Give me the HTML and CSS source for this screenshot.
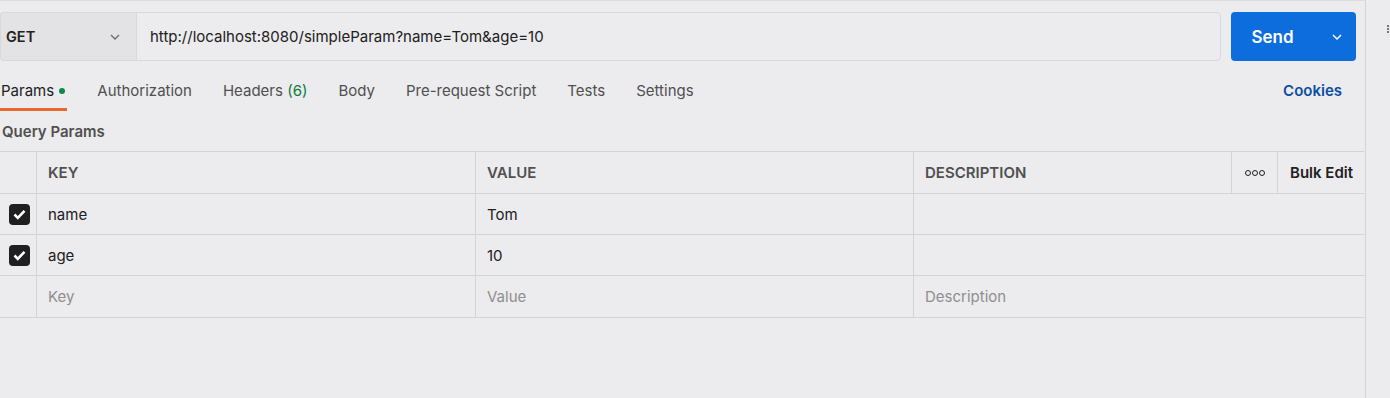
FILE: index.html
```html
<!DOCTYPE html>
<html lang="en">

<head>
  <meta charset="UTF-8">
  <title>Request</title>
  <link rel="stylesheet" href="styles.css">
</head>

<body>
  <div class="app">
    <div class="main">
      <div class="requestBar">
        <div class="method">
          <span>GET</span>
          <svg width="12" height="12" viewBox="0 0 12 12"><path d="M2 4l4 4 4-4" fill="none" stroke="#6b6b6b" stroke-width="1.3"/></svg>
        </div>
        <div class="url">http://localhost:8080/simpleParam?name=Tom&amp;age=10</div>
        <div class="send">
          <span class="sendText">Send</span>
          <span class="sendArrow">
            <svg width="12" height="12" viewBox="0 0 12 12"><path d="M2 4l4 4 4-4" fill="none" stroke="#fff" stroke-width="1.5"/></svg>
          </span>
        </div>
      </div>

      <div class="tabs">
        <div class="tab active">Params <span class="dot"></span></div>
        <div class="tab">Authorization</div>
        <div class="tab">Headers <span class="count">(6)</span></div>
        <div class="tab">Body</div>
        <div class="tab">Pre-request Script</div>
        <div class="tab">Tests</div>
        <div class="tab">Settings</div>
        <div class="cookies">Cookies</div>
      </div>

      <div class="queryTitle">Query Params</div>

      <div class="table">
        <div class="row head">
          <div class="cell check"></div>
          <div class="cell key">KEY</div>
          <div class="cell value">VALUE</div>
          <div class="cell desc">DESCRIPTION</div>
          <div class="cell more"><span class="dots"><i></i><i></i><i></i></span></div>
          <div class="cell bulk">Bulk Edit</div>
        </div>
        <div class="row">
          <div class="cell check"><span class="box"><svg width="13" height="11" viewBox="0 0 13 11"><path d="M1.5 5.5l3.3 3.3 6.7-7" fill="none" stroke="#fff" stroke-width="2.6"/></svg></span></div>
          <div class="cell key">name</div>
          <div class="cell value">Tom</div>
          <div class="cell descWide"></div>
        </div>
        <div class="row">
          <div class="cell check"><span class="box"><svg width="13" height="11" viewBox="0 0 13 11"><path d="M1.5 5.5l3.3 3.3 6.7-7" fill="none" stroke="#fff" stroke-width="2.6"/></svg></span></div>
          <div class="cell key">age</div>
          <div class="cell value">10</div>
          <div class="cell descWide"></div>
        </div>
        <div class="row empty">
          <div class="cell check"></div>
          <div class="cell key">Key</div>
          <div class="cell value">Value</div>
          <div class="cell descWide">Description</div>
        </div>
      </div>
    </div>
    <div class="side"><span class="grip"></span></div>
  </div>
</body>

</html>
```

FILE: styles.css
```css
* {
  margin: 0;
  padding: 0;
  box-sizing: border-box;
}

body {
  background: #ecebed;
  font-family: Inter, "Noto Sans", sans-serif;
  font-size: 15px;
  color: #212121;
  overflow: hidden;
}

.app {
  display: flex;
  height: 398px;
}

.main {
  width: 1366px;
  border-right: 1px solid #d4d3d5;
  border-top: 1px solid #dcdbdd;
}

.side {
  flex: 1;
  position: relative;
}

.side .grip {
  position: absolute;
  left: 21px;
  top: 25px;
  width: 3px;
  height: 8px;
  border-left: 2px dotted #777;
}

.requestBar {
  display: flex;
  height: 49px;
  margin-top: 11px;
  padding-right: 9px;
}

.method {
  width: 136px;
  background: #e3e2e4;
  border: 1px solid #d8d7d9;
  border-right: none;
  border-radius: 4px 0 0 4px;
  display: flex;
  align-items: center;
  justify-content: space-between;
  padding: 0 15px 0 5px;
  font-weight: 600;
  font-size: 14.5px;
  color: #212121;
}

.url {
  width: 1085px;
  border: 1px solid #d8d7d9;
  border-radius: 0 4px 4px 0;
  display: flex;
  align-items: center;
  padding-left: 13px;
  font-size: 15px;
  color: #212121;
}

.send {
  margin-left: 10px;
  width: 125px;
  background: #0d6ddc;
  border-radius: 4px;
  display: flex;
  align-items: center;
  color: #fff;
}

.sendText {
  flex: 1;
  text-align: center;
  font-weight: 600;
  font-size: 17px;
  padding-right: 4px;
}

.sendArrow {
  width: 38px;
  display: flex;
  justify-content: center;
  align-items: center;
}

.tabs {
  display: flex;
  align-items: flex-start;
  height: 52px;
  padding-top: 20px;
  padding-right: 23px;
  font-size: 15px;
  color: #505050;
}

.tab {
  margin-right: 30px;
  padding-left: 1px;
  height: 30px;
  border-bottom: 3px solid transparent;
}

.tab.active {
  color: #212121;
  border-bottom: 3px solid #e8692c;
  padding-right: 2px;
  margin-right: 29px;
}

.dot {
  display: inline-block;
  width: 6px;
  height: 6px;
  border-radius: 50%;
  background: #0a8a43;
  vertical-align: middle;
  margin-left: 1px;
  position: relative;
  top: -1px;
}

.count {
  color: #0a7d3e;
}

.cookies {
  margin-left: auto;
  color: #0b4fa3;
  font-weight: 600;
}

.queryTitle {
  padding: 11px 0 0 2px;
  font-weight: 600;
  font-size: 15px;
  color: #505050;
  height: 38px;
  line-height: 16px;
}

.table {
  border-top: 1px solid #d4d3d5;
  margin-right: 1px;
}

.row {
  display: flex;
  height: 41px;
  border-bottom: 1px solid #d4d3d5;
}

.row.head,
.row.empty {
  height: 42px;
}

.cell {
  display: flex;
  align-items: center;
  border-right: 1px solid #d4d3d5;
  padding-left: 11px;
}

.head .cell {
  font-weight: 600;
  color: #505050;
}

.check {
  width: 37px;
  padding-left: 9px;
}

.key {
  width: 439px;
}

.value {
  width: 438px;
}

.desc {
  width: 318px;
}

.descWide {
  flex: 1;
  border-right: none;
}

.more {
  width: 46px;
  justify-content: center;
  padding-left: 0;
}

.head .bulk {
  flex: 1;
  border-right: none;
  padding-left: 12px;
  color: #212121;
}

.dots {
  display: flex;
  gap: 1px;
}

.dots i {
  width: 6px;
  height: 6px;
  border: 1.5px solid #212121;
  border-radius: 50%;
}

.box {
  width: 21px;
  height: 21px;
  background: #1f1f1f;
  border-radius: 4px;
  display: flex;
  align-items: center;
  justify-content: center;
}

.empty .cell {
  color: #8f8f8f;
}
```
